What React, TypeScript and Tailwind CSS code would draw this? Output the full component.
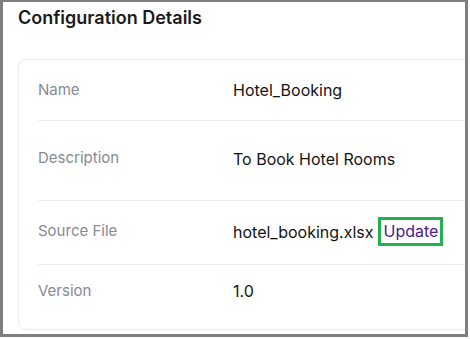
const rows = [
  { label: "Name", value: "Hotel_Booking", h: "h-[61px]" },
  { label: "Description", value: "To Book Hotel Rooms", h: "h-[80px] pb-[4px]" },
  { label: "Source File", value: "hotel_booking.xlsx", h: "h-[64px] pb-[2px]", update: true },
  { label: "Version", value: "1.0", h: "h-[64px] pb-[12px]", last: true },
];

export default function App() {
  return (
    <div className="w-[470px] h-[339px] bg-white" style={{ fontFamily: "Inter, 'Noto Sans', sans-serif" }}>
      <div className="w-[468px] h-[337px] border-[3px] border-t-2 border-[#7f7f7f] overflow-hidden bg-white">
        {/* Titulo */}
        <div className="pl-[15px] pt-[2px]">
          <h2 className="text-lg leading-7 font-semibold text-[#1a1a1a]">Configuration Details</h2>
        </div>

        {/* Tarjeta */}
        <div className="ml-[15px] mt-[27px] w-[480px] rounded-lg border border-[#ececec] pl-[19px]">
          {rows.map((r) => (
            <div
              key={r.label}
              className={`flex items-center ${r.h} ${r.last ? "" : "border-b border-[#ededed]"}`}
            >
              <div className="w-[195px] text-[15px] text-[#858a93]">{r.label}</div>
              <div className="flex items-center text-base text-[#141414]">
                <span>{r.value}</span>
                {r.update && (
                  <span className="ml-[5px] border-[3px] border-[#22b14c] px-[2px] text-base leading-[23px] text-[#4a1a8c]">
                    Update
                  </span>
                )}
              </div>
            </div>
          ))}
        </div>
      </div>
    </div>
  );
}
